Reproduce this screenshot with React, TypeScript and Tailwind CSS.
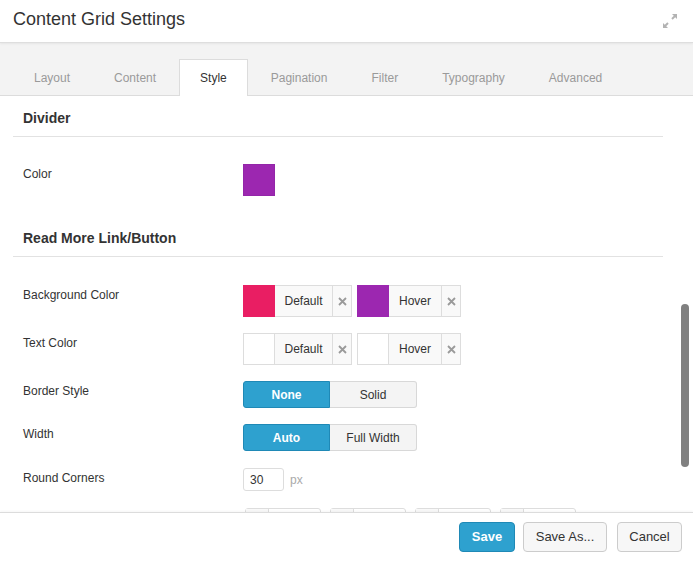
import React from 'react';

const tabs = ['Layout', 'Content', 'Style', 'Pagination', 'Filter', 'Typography', 'Advanced'];

const ExpandIcon = () => (
  <svg width="18" height="18" viewBox="0 0 18 18" fill="none">
    <path d="M11 2h5v5z" fill="#b3b3b3" />
    <path d="M14.5 3.5l-3.5 3.5" stroke="#b3b3b3" strokeWidth="2" />
    <path d="M7 16H2v-5z" fill="#b3b3b3" />
    <path d="M3.5 14.5L7 11" stroke="#b3b3b3" strokeWidth="2" />
  </svg>
);

const ClearX = () => (
  <svg width="9" height="9" viewBox="0 0 9 9">
    <path d="M1 1l7 7M8 1l-7 7" stroke="#9a9a9a" strokeWidth="1.8" />
  </svg>
);

interface ColorFieldProps {
  color?: string;
  label: string;
  labelW: string;
}

const ColorField = ({ color, label, labelW }: ColorFieldProps) => (
  <div className="flex h-8">
    <div
      className={`w-8 h-8 border ${color ? '' : 'border-[#dddddd] bg-white'}`}
      style={color ? { background: color, borderColor: color } : undefined}
    />
    <div
      className={`${labelW} h-8 flex items-center justify-center border-y border-r border-[#dddddd] bg-[#f9f9f9] text-[12px] text-[#333]`}
    >
      {label}
    </div>
    <div className="w-[19px] h-8 flex items-center justify-center border-y border-r border-[#dddddd] bg-[#f9f9f9]">
      <ClearX />
    </div>
  </div>
);

const Toggle = ({ options, active }: { options: string[]; active: number }) => (
  <div className="flex h-[27px]">
    {options.map((o, i) => (
      <div
        key={o}
        className={`w-[87px] flex items-center justify-center text-[12px] border ${
          i === 0 ? 'rounded-l-[3px]' : 'rounded-r-[3px] border-l-0'
        } ${
          i === active
            ? 'bg-[#2ea1cf] border-[#1f89b6] text-white font-semibold'
            : 'bg-[#f4f4f4] border-[#d8d8d8] text-[#333]'
        }`}
      >
        {o}
      </div>
    ))}
  </div>
);

const Row = ({ label, children, className = '' }: { label: string; children: React.ReactNode; className?: string }) => (
  <div className={`flex pl-[10px] ${className}`}>
    <div className="w-[220px] pt-[2px] leading-[16px] text-[12px] text-[#333]">{label}</div>
    <div>{children}</div>
  </div>
);

const Heading = ({ title, className = '' }: { title: string; className?: string }) => (
  <div className={`pl-[10px] pb-[8px] leading-[20px] text-[14px] font-bold text-[#333] border-b border-[#e2e2e2] ${className}`}>
    {title}
  </div>
);

export default function App() {
  return (
    <div
      className="h-[561px] w-[693px] flex flex-col bg-white overflow-hidden"
      style={{ fontFamily: '"Liberation Sans", Arial, sans-serif' }}
    >
      {/* Header */}
      <div className="h-[43px] shrink-0 flex items-center justify-between pl-[13px] pr-[14px] border-b border-[#dedede] shadow-[0_1px_2px_rgba(0,0,0,0.06)] relative z-10">
        <h1 className="text-[18px] text-[#333] pb-[4px]">Content Grid Settings</h1>
        <ExpandIcon />
      </div>

      {/* Tabs */}
      <div className="h-[53px] shrink-0 flex items-end gap-[2px] pl-[13px] bg-[#f3f3f3] border-b border-[#dcdcdc]">
        {tabs.map((t) => (
          <div
            key={t}
            className={`h-[37px] px-5 -mb-px flex items-center text-[12px] ${
              t === 'Style'
                ? 'bg-white border border-b-0 border-[#dcdcdc] text-[#333]'
                : 'text-[#9a9a9a] border border-transparent'
            }`}
          >
            {t}
          </div>
        ))}
      </div>

      {/* Content */}
      <div className="relative flex-1 overflow-hidden">
        <div className="pl-[13px] pr-[30px] pt-[12px]">
          <Heading title="Divider" />
          <Row label="Color" className="mt-[27px]">
            <div className="w-8 h-8 bg-[#9c27b0] border border-[#9326a8]" />
          </Row>

          <Heading title="Read More Link/Button" className="mt-[32px]" />
          <Row label="Background Color" className="mt-[28px]">
            <div className="flex gap-[5px]">
              <ColorField color="#e91e63" label="Default" labelW="w-[58px]" />
              <ColorField color="#9c27b0" label="Hover" labelW="w-[53px]" />
            </div>
          </Row>
          <Row label="Text Color" className="mt-4">
            <div className="flex gap-[5px]">
              <ColorField label="Default" labelW="w-[58px]" />
              <ColorField label="Hover" labelW="w-[53px]" />
            </div>
          </Row>
          <Row label="Border Style" className="mt-4">
            <Toggle options={['None', 'Solid']} active={0} />
          </Row>
          <Row label="Width" className="mt-4">
            <Toggle options={['Auto', 'Full Width']} active={0} />
          </Row>
          <Row label="Round Corners" className="mt-[17px]">
            <div className="flex items-center gap-[6px]">
              <div className="w-[41px] h-[23px] border border-[#dddddd] rounded-[3px] pl-[6px] flex items-center text-[12px] text-[#333]">
                30
              </div>
              <span className="text-[12px] text-[#aaa]">px</span>
            </div>
          </Row>
          <Row label="" className="mt-[17px]">
            <div className="flex gap-[9px] pl-[2px]">
              {[0, 1, 2, 3].map((i) => (
                <div key={i} className="flex h-[23px] w-[76px] border border-[#dddddd] rounded-[3px]">
                  <div className="w-[23px] border-r border-[#dddddd] bg-[#f9f9f9]" />
                </div>
              ))}
            </div>
          </Row>
        </div>

        {/* scrollbar */}
        <div className="absolute left-[681px] top-[208px] w-[8px] h-[163px] rounded-full bg-[#808080]" />
      </div>

      {/* Footer */}
      <div className="h-[49px] shrink-0 flex items-center justify-end gap-2 pr-[11px] border-t border-[#dcdcdc] bg-white relative z-10 shadow-[0_-1px_2px_rgba(0,0,0,0.04)]">
        <button className="h-[30px] w-[56px] rounded-[4px] bg-[#2ea1cf] border border-[#1f89b6] text-white text-[13px] font-bold">
          Save
        </button>
        <button className="h-[30px] w-[84px] rounded-[4px] bg-[#f7f7f7] border border-[#cccccc] text-[#333] text-[13px]">
          Save As...
        </button>
        <button className="ml-[2px] h-[30px] w-[65px] rounded-[4px] bg-[#f7f7f7] border border-[#cccccc] text-[#333] text-[13px]">
          Cancel
        </button>
      </div>
    </div>
  );
}
